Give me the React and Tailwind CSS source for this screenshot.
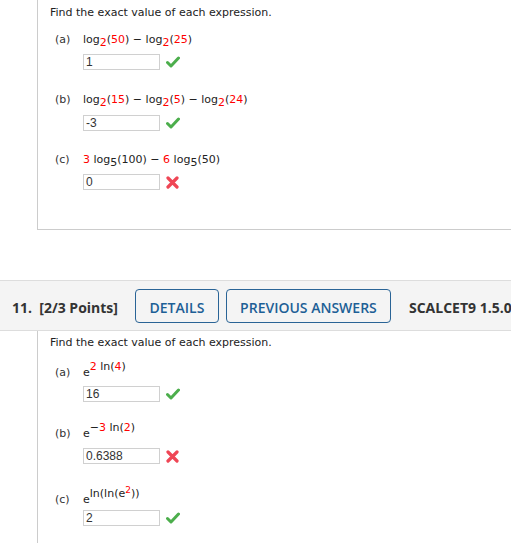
import React from 'react'

// ── Icons ─────────────────────────────────────────────────────
function Check() {
  return (
    <svg width="14" height="12" viewBox="0 0 14 12" className="ml-[6px] shrink-0">
      <path d="M1.5 6.5 L5 10 L12.5 2" fill="none" stroke="#4cae4c" strokeWidth="3" strokeLinecap="round" strokeLinejoin="round" />
    </svg>
  )
}

function Cross() {
  return (
    <svg width="13" height="13" viewBox="0 0 13 13" className="ml-[6px] shrink-0">
      <path d="M2 2 L11 11 M11 2 L2 11" fill="none" stroke="#ef4655" strokeWidth="3.2" strokeLinecap="round" />
    </svg>
  )
}

// ── Math bits ─────────────────────────────────────────────────
const R = ({ children }) => <span className="text-[#ff0000]">{children}</span>
const Sup = ({ children }) => <sup className="text-[11px]">{children}</sup>

function Log({ base, baseRed = true, children }) {
  return (
    <span>
      log<sub className={baseRed ? 'text-[11px] text-[#ff0000]' : 'text-[11px]'}>{base}</sub>({children})
    </span>
  )
}

function Part({ label, expr, value, ok, mt, gap }) {
  return (
    <div style={{ marginTop: mt }}>
      <div className="flex items-center h-[16px]">
        <span className="w-[33px] pl-[5px] text-[#333]">({label})</span>
        <span className="whitespace-nowrap">{expr}</span>
      </div>
      <div className="flex items-center pl-[33px]" style={{ marginTop: gap }}>
        <div className="w-[77px] h-[16px] border border-[#d0d0d0] bg-white px-[2px] text-[12px] leading-[14px] text-[#333] font-['Liberation_Sans',Arial,sans-serif]">
          {value}
        </div>
        {ok ? <Check /> : <Cross />}
      </div>
    </div>
  )
}

function Panel({ children, className }) {
  return (
    <div className={"ml-[37px] border-l border-[#cccccc] pl-[12px] text-[11px] text-[#222] font-['DejaVu_Sans',Verdana,sans-serif] " + className}>
      {children}
    </div>
  )
}

export default function App() {
  return (
    <div className="w-[511px] h-[543px] overflow-hidden bg-white">
      {/* Question 10 (tail) */}
      <Panel className="border-b pt-[5px] pb-[39px]">
        <div className="h-[16px] leading-[16px]">Find the exact value of each expression.</div>
        <Part
          label="a" mt={11} gap={6} value="1" ok
          expr={<><Log base="2"><R>50</R></Log> − <Log base="2"><R>25</R></Log></>}
        />
        <Part
          label="b" mt={22} gap={7} value="-3" ok
          expr={<><Log base="2"><R>15</R></Log> − <Log base="2"><R>5</R></Log> − <Log base="2"><R>24</R></Log></>}
        />
        <Part
          label="c" mt={21} gap={6} value="0" ok={false}
          expr={<><R>3</R> <Log base="5" baseRed={false}>100</Log> − <R>6</R> <Log base="5" baseRed={false}>50</Log></>}
        />
      </Panel>

      {/* Question 11 header */}
      <div className="mt-[50px] h-[51px] border-y border-[#dddddd] bg-[#f4f4f4] flex items-center pl-[12px] whitespace-nowrap font-['Open_Sans',sans-serif]">
        <span className="shrink-0 text-[14px] font-bold text-[#333] mt-[3px]">11.&nbsp; [2/3 Points]</span>
        <button className="shrink-0 ml-[17px] w-[84px] h-[34px] rounded-[4px] border border-[#2a6496] text-[14px] font-semibold text-[#1d5f96] pt-[4px]">
          DETAILS
        </button>
        <button className="shrink-0 ml-[7px] w-[165px] h-[34px] rounded-[4px] border border-[#2a6496] text-[14px] font-semibold text-[#1d5f96] pt-[4px]">
          PREVIOUS ANSWERS
        </button>
        <span className="shrink-0 ml-[18px] text-[14px] font-bold text-[#333] mt-[3px]">SCALCET9 1.5.009.</span>
      </div>

      {/* Question 11 body */}
      <Panel className="pt-[4px] h-[220px]">
        <div className="h-[16px] leading-[16px]">Find the exact value of each expression.</div>
        <Part
          label="a" mt={14} gap={5} value="16" ok
          expr={<>e<Sup><R>2</R> ln(<R>4</R>)</Sup></>}
        />
        <Part
          label="b" mt={24} gap={6} value="0.6388" ok={false}
          expr={<>e<Sup>−<R>3</R> ln(<R>2</R>)</Sup></>}
        />
        <Part
          label="c" mt={28} gap={2} value="2" ok
          expr={<>e<Sup>ln(ln(e<sup className="text-[9px]"><R>2</R></sup>))</Sup></>}
        />
      </Panel>
    </div>
  )
}
